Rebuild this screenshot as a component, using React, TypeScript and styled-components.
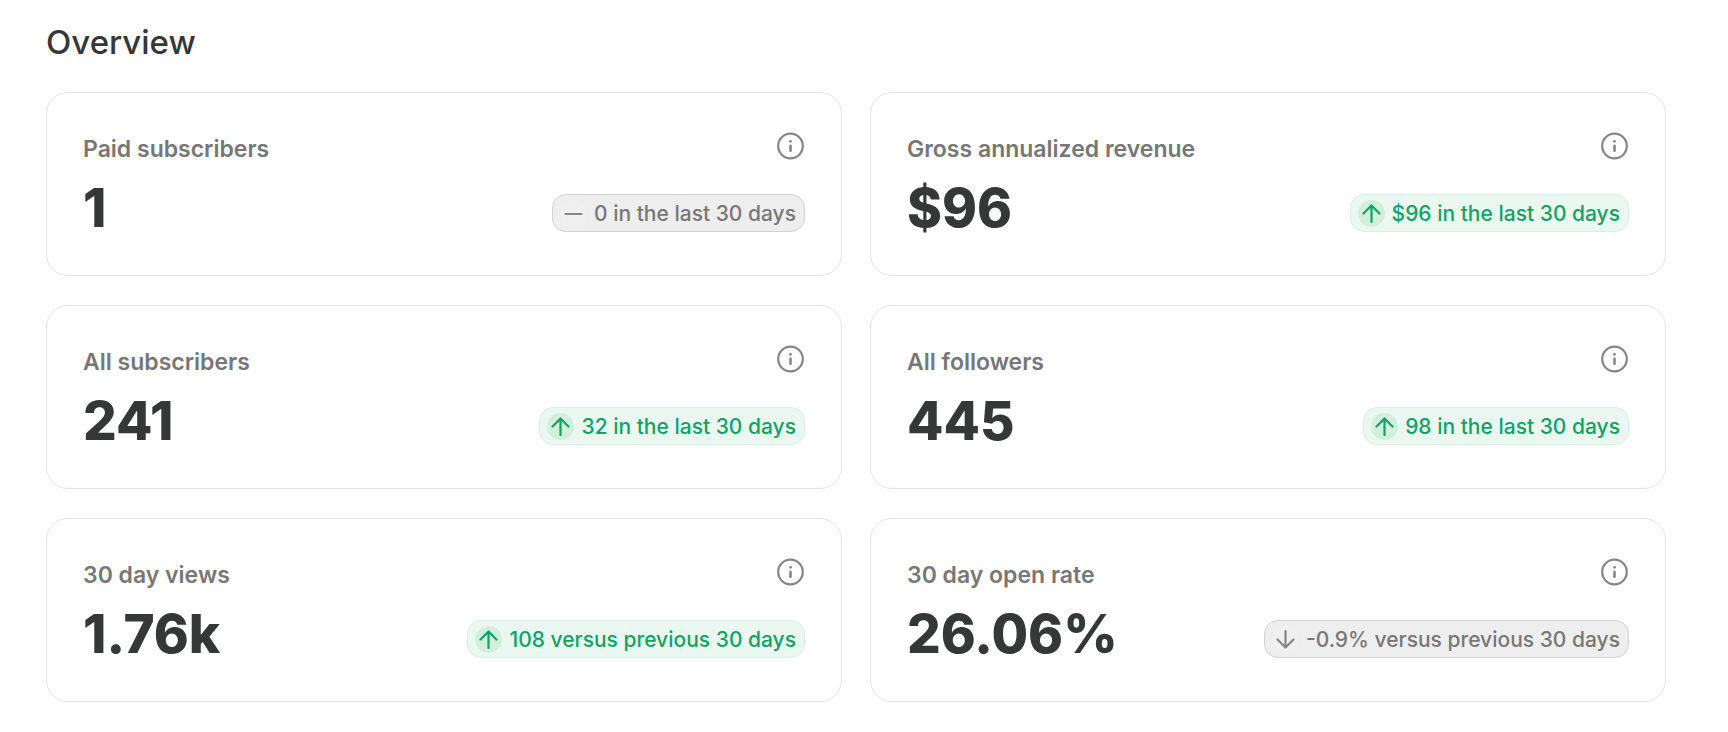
import React from 'react';
import styled, { createGlobalStyle } from 'styled-components';

type Trend = 'up' | 'down' | 'flat';

interface Stat {
  label: string;
  value: string;
  change: string;
  trend: Trend;
}

const stats: Stat[] = [
  { label: 'Paid subscribers', value: '1', change: '0 in the last 30 days', trend: 'flat' },
  { label: 'Gross annualized revenue', value: '$96', change: '$96 in the last 30 days', trend: 'up' },
  { label: 'All subscribers', value: '241', change: '32 in the last 30 days', trend: 'up' },
  { label: 'All followers', value: '445', change: '98 in the last 30 days', trend: 'up' },
  { label: '30 day views', value: '1.76k', change: '108 versus previous 30 days', trend: 'up' },
  { label: '30 day open rate', value: '26.06%', change: '-0.9% versus previous 30 days', trend: 'down' },
];

const GlobalStyle = createGlobalStyle`
  *, *::before, *::after { box-sizing: border-box; }
  body {
    margin: 0;
    background: #fff;
    color: #363737;
    font-family: Inter, "Liberation Sans", sans-serif;
    -webkit-font-smoothing: antialiased;
  }
`;

const Page = styled.main`
  padding: 20px 62px 30px 46px;
`;

const Title = styled.h1`
  margin: 0 0 28px;
  font-size: 33px;
  line-height: 44px;
  font-weight: 500;
`;

const Grid = styled.div`
  display: grid;
  grid-template-columns: repeat(2, minmax(0, 1fr));
  gap: 29px 28px;
`;

const Card = styled.section`
  display: flex;
  flex-direction: column;
  gap: 14px;
  padding: 39px 36px 36px;
  border: 1px solid #e4e4e4;
  border-radius: 22px;
`;

const CardHeader = styled.header`
  display: flex;
  justify-content: space-between;
  align-items: flex-start;
`;

const Label = styled.h2`
  margin: 0;
  padding-top: 2px;
  font-size: 23px;
  line-height: 30px;
  font-weight: 600;
  color: #777;
`;

const InfoButton = styled.button`
  display: flex;
  padding: 0;
  border: 0;
  background: none;
  color: #868686;
  cursor: pointer;
`;

const CardBody = styled.div`
  display: flex;
  justify-content: space-between;
  align-items: center;
`;

const Value = styled.p`
  margin: 0;
  font-size: 53px;
  line-height: 61px;
  font-weight: 800;
`;

const Badge = styled.span<{ $positive: boolean }>`
  display: inline-flex;
  align-items: center;
  gap: 7px;
  margin-top: 9px;
  padding: 0 8px 0 7px;
  height: 38px;
  border: 1px solid ${(p) => (p.$positive ? '#d5f1e5' : '#d2d2d2')};
  border-radius: 14px;
  background: ${(p) => (p.$positive ? '#ebf8f2' : '#eee')};
  color: ${(p) => (p.$positive ? '#0fa365' : '#777')};
  font-size: 21px;
  font-weight: 500;
  white-space: nowrap;
`;

const TrendMark = styled.span<{ $positive: boolean }>`
  display: flex;
  width: 27px;
  height: 27px;
  border-radius: 50%;
  background: ${(p) => (p.$positive ? '#d2eedc' : '#f0f0f0')};
  color: ${(p) => (p.$positive ? '#0fa365' : '#868686')};
`;

const trendPaths: Record<Trend, string> = {
  up: 'M13.5 22V5.5M5.5 13.5L13.5 5.5L21.5 13.5',
  down: 'M13.5 5V21.5M5.5 13.5L13.5 21.5L21.5 13.5',
  flat: 'M5.5 14H21.5',
};

const TrendIcon = ({ trend }: { trend: Trend }) => (
  <svg width="27" height="27" viewBox="0 0 27 27" fill="none" stroke="currentColor" strokeWidth="2.2" strokeLinecap="round" strokeLinejoin="round" aria-hidden="true">
    <path d={trendPaths[trend]} />
  </svg>
);

const InfoIcon = () => (
  <svg width="28" height="28" viewBox="0 0 28 28" fill="none" stroke="currentColor" aria-hidden="true">
    <circle cx="13.5" cy="14" r="12.3" strokeWidth="2.2" />
    <path d="M13.5 13.9V18.7" strokeWidth="2.6" strokeLinecap="round" />
    <circle cx="13.5" cy="9.3" r="1.4" fill="currentColor" stroke="none" />
  </svg>
);

const StatCard = ({ label, value, change, trend }: Stat) => {
  const positive = trend === 'up';
  return (
    <Card>
      <CardHeader>
        <Label>{label}</Label>
        <InfoButton type="button" aria-label={`About ${label}`}>
          <InfoIcon />
        </InfoButton>
      </CardHeader>
      <CardBody>
        <Value>{value}</Value>
        <Badge $positive={positive}>
          <TrendMark $positive={positive}>
            <TrendIcon trend={trend} />
          </TrendMark>
          {change}
        </Badge>
      </CardBody>
    </Card>
  );
};

export default function App() {
  return (
    <>
      <GlobalStyle />
      <Page>
        <Title>Overview</Title>
        <Grid>
          {stats.map((stat) => (
            <StatCard key={stat.label} {...stat} />
          ))}
        </Grid>
      </Page>
    </>
  );
}
